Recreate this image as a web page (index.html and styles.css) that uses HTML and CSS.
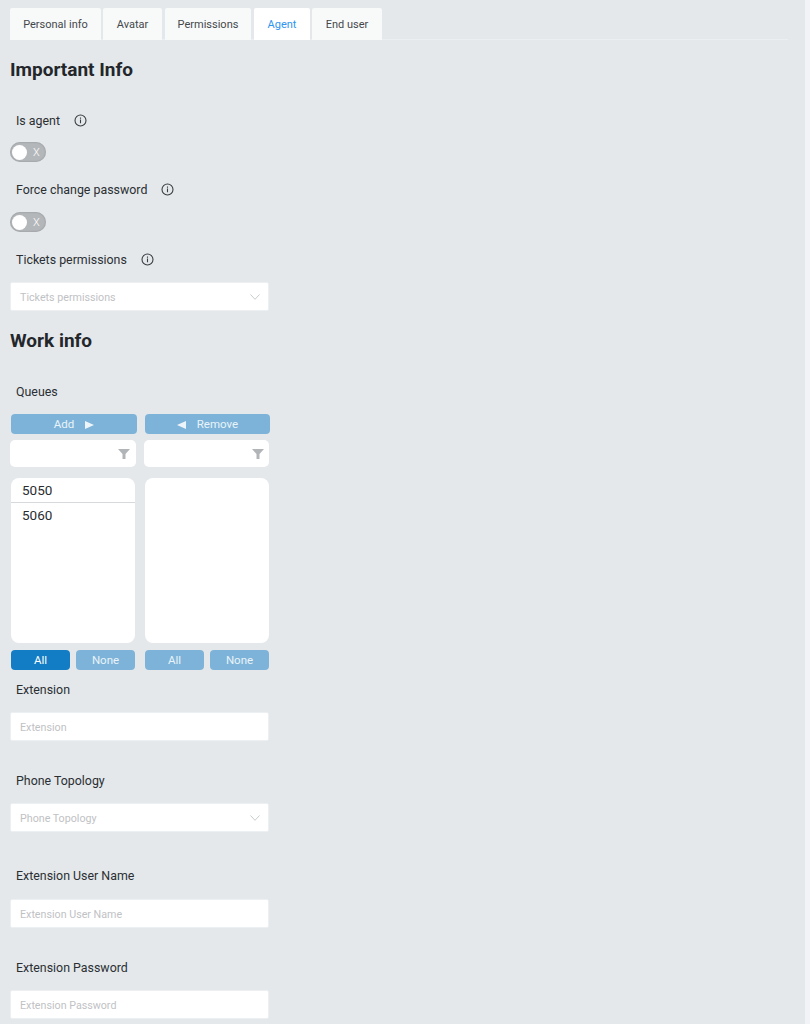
FILE: index.html
```html
<!DOCTYPE html>
<html lang="en">
<head>
<meta charset="utf-8">
<title>Agent</title>
<link rel="stylesheet" href="styles.css">
</head>
<body>
<svg class="sprite" width="0" height="0">
  <symbol id="info" viewBox="0 0 13 13"><circle cx="6.5" cy="6.5" r="5.5" fill="none" stroke="currentColor" stroke-width="1.1"/><path d="M6.5 5.6v3.6M6.5 3.6v1.1" fill="none" stroke="currentColor" stroke-width="1.1"/></symbol>
  <symbol id="chev" viewBox="0 0 10 6"><path d="M.5.5 5 5.3 9.5.5" fill="none" stroke="currentColor" stroke-width=".9"/></symbol>
  <symbol id="filter" viewBox="0 0 12 10"><path d="M0 0h12L7.5 5v5h-3V5z" fill="currentColor"/></symbol>
</svg>
<main class="page">
  <nav class="tabs">
    <a class="tab t1">Personal info</a>
    <a class="tab t2">Avatar</a>
    <a class="tab t3">Permissions</a>
    <a class="tab t4 active">Agent</a>
    <a class="tab t5">End user</a>
  </nav>

  <h2 class="section first">Important Info</h2>

  <div class="label l-agent">Is agent <svg class="info"><use href="#info"/></svg></div>
  <div class="switch"><span class="knob"></span><span class="x">X</span></div>

  <div class="label l-gap">Force change password <svg class="info"><use href="#info"/></svg></div>
  <div class="switch s2"><span class="knob"></span><span class="x">X</span></div>

  <div class="label l-gap">Tickets permissions <svg class="info"><use href="#info"/></svg></div>
  <div class="field select">Tickets permissions<svg class="chev"><use href="#chev"/></svg></div>

  <h2 class="section work">Work info</h2>

  <div class="label l-queues">Queues</div>
  <div class="dual">
    <div class="col">
      <button class="btn move add">Add <span class="tri right"></span></button>
      <div class="filter"><svg class="funnel"><use href="#filter"/></svg></div>
      <ul class="list"><li class="sel">5050</li><li>5060</li></ul>
      <div class="pair"><button class="btn solid">All</button><button class="btn">None</button></div>
    </div>
    <div class="col right-col">
      <button class="btn move rem"><span class="tri left"></span> Remove</button>
      <div class="filter"><svg class="funnel"><use href="#filter"/></svg></div>
      <ul class="list"></ul>
      <div class="pair"><button class="btn">All</button><button class="btn">None</button></div>
    </div>
  </div>

  <div class="label l-ext">Extension</div>
  <div class="field">Extension</div>

  <div class="label l-topo">Phone Topology</div>
  <div class="field select topo">Phone Topology<svg class="chev"><use href="#chev"/></svg></div>

  <div class="label l-user">Extension User Name</div>
  <div class="field user">Extension User Name</div>

  <div class="label l-pass">Extension Password</div>
  <div class="field">Extension Password</div>
</main>
</body>
</html>
```

FILE: styles.css
```css
* { box-sizing: border-box; }
html, body { margin: 0; height: 1024px; overflow: hidden; }
body {
  background: #e4e8eb;
  font-family: Roboto, "Noto Sans", sans-serif;
  color: #2b2f33;
  border-right: 5px solid #f1f3f6;
}
.sprite { position: absolute; }
.page { padding: 8px 0 0 10px; width: 788px; }

.tabs { display: flex; gap: 2px; height: 32px; border-bottom: 1px solid #eceff1; }
.tab {
  display: flex; align-items: center; justify-content: center;
  height: 32px; background: #f8f9f9; font-size: 11px; color: #44484c;
  border-radius: 2px 2px 0 0;
}
.t1 { width: 91px; } .t2 { width: 59px; }
.t3 { width: 86px; margin-left: 1px; }
.t4 { width: 56px; margin-left: 1px; }
.t5 { width: 70px; }
.tab.active { background: #fff; color: #2f95f0; }

.section { margin: 0; font-size: 19px; line-height: 24px; font-weight: 700; color: #23262a; }
.section.first { margin-top: 18px; }
.section.work { margin-top: 18px; }

.label { display: flex; align-items: center; padding-left: 6px; font-size: 12.4px; height: 18px; color: #2b2f33; }
.l-agent { margin-top: 29px; }
.l-gap { margin-top: 18px; }
.l-queues { margin-top: 29px; }
.l-ext { margin-top: 10px; }
.l-topo { margin-top: 30px; }
.l-user { margin-top: 34px; }
.l-pass { margin-top: 30px; }
.info { width: 13px; height: 13px; margin-left: 14px; color: #3a3e42; }

.switch {
  display: flex; align-items: center; width: 36px; height: 20px; margin-top: 13px;
  border-radius: 10px; background: #b4b7ba; padding-left: 2px;
  box-shadow: inset 0 0 2px rgba(0,0,0,.25);
}
.s2 { margin-top: 14px; }
.knob { width: 15px; height: 15px; border-radius: 50%; background: #fff; }
.x { margin-left: 6px; font-size: 11px; font-weight: 300; color: #fff; }

.field {
  display: flex; align-items: center; justify-content: space-between;
  width: 259px; height: 29px; margin-top: 14px; padding: 1px 8px 0 9px;
  background: #fff; border-radius: 2px; font-size: 10.7px; color: #bfc2c5;
  border: 1px solid #edf0f2;
}
.topo { margin-top: 14px; }
.user { margin-top: 15px; }
.chev { width: 10px; height: 6px; color: #c2c5c8; }

.dual { display: flex; gap: 8px; margin-top: 14px; width: 260px; }
.col { width: 126px; }
.btn {
  display: block; border: 0; padding: 0; height: 20px; border-radius: 4px;
  background: #7db3d8; color: #e9f3f9; font: 400 11.5px/21px Roboto, sans-serif; text-align: center;
}
.btn.solid { background: #127cc4; color: #fff; }
.move { width: 126px; margin-left: 1px; }
.right-col .move { width: 125px; }
.filter {
  display: flex; align-items: center; justify-content: flex-end; width: 126px; height: 27px;
  margin-top: 6px; padding-right: 6px; background: #fff; border-radius: 5px;
}
.right-col .filter { width: 125px; padding-right: 5px; }
.funnel { width: 12px; height: 10px; color: #b2b5b8; }
.list {
  list-style: none; margin: 11px 0 0 1px; padding: 0; width: 124px; height: 165px;
  background: #fff; border-radius: 8px; font-size: 13.5px; color: #2a2d30;
  overflow: hidden;
}
.list li { height: 24px; line-height: 25px; padding-left: 11px; }
.list .sel { border-bottom: 1px solid #d7dadc; height: 25px; }
.pair { display: flex; gap: 6px; margin: 7px 0 0 1px; width: 124px; }
.pair .btn { flex: 1; }
.tri { display: inline-block; border-style: solid; border-color: transparent; border-width: 4.5px 0; margin: 0 8px; vertical-align: -1px; }
.tri.right { border-left: 9px solid #eef5fa; margin-right: 0; }
.tri.left { border-right: 9px solid #eef5fa; margin-left: 0; }
```
